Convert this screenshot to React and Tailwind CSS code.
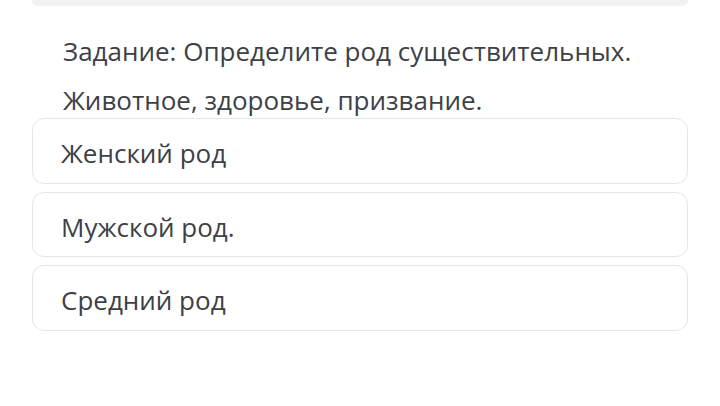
export default function App() {
  const options = ['Женский род', 'Мужской род.', 'Средний род'];
  return (
    <div className="w-[720px] h-[406px] bg-white overflow-hidden font-['Open_Sans',sans-serif] text-[#3d4147]">
      <div className="mx-8 h-[6px] rounded-b-[10px] bg-[#f2f2f6]" />
      <div className="px-8">
        <div className="pl-[31px] pt-[21px] -mb-[7px] text-[26px] leading-[49px]">
          <p>Задание: Определите род существительных.</p>
          <p>Животное, здоровье, призвание.</p>
        </div>
        <div className="flex flex-col gap-2">
          {options.map((o) => (
            <div key={o} className="h-[65.5px] flex items-center pt-[6px] px-7 rounded-[12px] border border-[#e6e6e6] text-[26px]">
              {o}
            </div>
          ))}
        </div>
      </div>
    </div>
  );
}
